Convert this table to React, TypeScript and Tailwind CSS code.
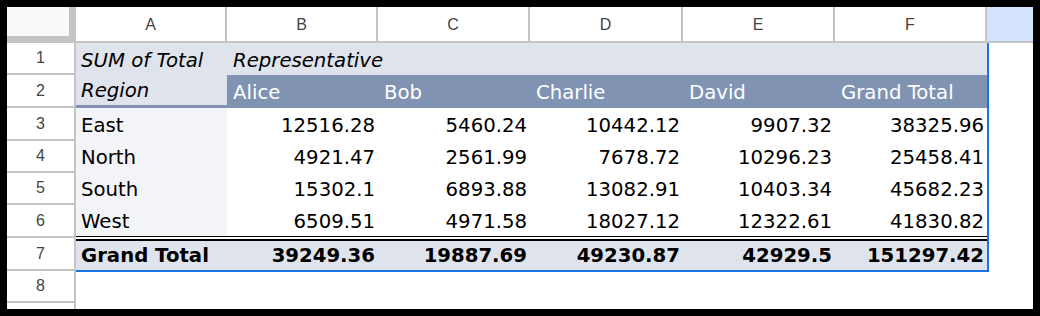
const cols = ["A", "B", "C", "D", "E", "F"];
const colWidths = ["w-[151px]", "w-[151px]", "w-[152px]", "w-[153px]", "w-[152px]", "w-[152px]"];
const rowHeights = ["h-[32px]", "h-[33px]", "h-[33px]", "h-[32px]", "h-[32px]", "h-[33px]", "h-[33px]", "h-[32px]"];

const reps = ["Alice", "Bob", "Charlie", "David", "Grand Total"];

const data = [
  { region: "East", values: ["12516.28", "5460.24", "10442.12", "9907.32", "38325.96"], h: "h-[33px]" },
  { region: "North", values: ["4921.47", "2561.99", "7678.72", "10296.23", "25458.41"], h: "h-[32px]" },
  { region: "South", values: ["15302.1", "6893.88", "13082.91", "10403.34", "45682.23"], h: "h-[32px]" },
  { region: "West", values: ["6509.51", "4971.58", "18027.12", "12322.61", "41830.82"], h: "h-[31px]" },
];

const totals = ["39249.36", "19887.69", "49230.87", "42929.5", "151297.42"];

const App = () => {
  return (
    <div className="w-[1040px] h-[316px] bg-black p-[7px] overflow-hidden">
      <div className="w-full h-full bg-white flex flex-col overflow-hidden font-['DejaVu_Sans',sans-serif] text-[19.7px] text-black">
        {/* Column headers */}
        <div className="flex h-[36px] shrink-0 border-b-2 border-[#c4c4c4] font-['Liberation_Sans',Arial,sans-serif] text-[16px] text-[#444]">
          <div className="w-[69px] h-[34px] bg-[#c4c4c4] shrink-0">
            <div className="w-[62px] h-[29px] bg-[#f8f9fa]" />
          </div>
          {cols.map((c, i) => (
            <div
              key={c}
              className={`${colWidths[i]} shrink-0 flex items-center justify-center pt-[2px] border-r-2 border-[#c4c4c4]`}
            >
              {c}
            </div>
          ))}
          <div className="flex-1 bg-[#d3e3fd]" />
        </div>

        <div className="flex flex-1 min-h-0">
          {/* Row headers */}
          <div className="w-[69px] shrink-0 flex flex-col border-r-2 border-[#c4c4c4] font-['Liberation_Sans',Arial,sans-serif] text-[16px] text-[#444]">
            {rowHeights.map((h, i) => (
              <div
                key={i}
                className={`${h} shrink-0 flex items-center justify-center border-b-2 border-[#c4c4c4]`}
              >
                {i + 1}
              </div>
            ))}
            <div className="flex-1" />
          </div>

          {/* Pivot table */}
          <div className="flex flex-col self-start border-r-2 border-[#1a73e8]">
            {/* Row 1 */}
            <div className="flex h-[32px] bg-[#dfe3ec] italic">
              <div className="w-[151px] flex items-center pt-[4px] px-[5px]">SUM of Total</div>
              <div className="flex-1 flex items-center pt-[4px] px-[6px]">Representative</div>
            </div>

            {/* Row 2 */}
            <div className="flex h-[33px]">
              <div className="w-[151px] flex items-center pt-[2px] px-[5px] bg-[#dfe3ec] italic border-b-[3px] border-[#8093b3]">
                Region
              </div>
              {reps.map((r, i) => (
                <div
                  key={r}
                  className={`${colWidths[i + 1]} flex items-center pt-[2px] px-[6px] bg-[#8093b3] text-white`}
                >
                  {r}
                </div>
              ))}
            </div>

            {/* Data rows */}
            {data.map((row) => (
              <div key={row.region} className={`flex ${row.h}`}>
                <div className="w-[151px] flex items-center pt-[2px] px-[5px] bg-[#f3f4f7]">{row.region}</div>
                {row.values.map((v, i) => (
                  <div
                    key={i}
                    className={`${colWidths[i + 1]} flex items-center justify-end pt-[2px] pl-[5px] pr-[3px]`}
                  >
                    {v}
                  </div>
                ))}
              </div>
            ))}

            {/* Double line */}
            <div className="h-[5px] border-t border-b-2 border-black bg-white" />

            {/* Grand total */}
            <div className="flex h-[31px] bg-[#dfe3ec] font-bold border-b-2 border-[#1a73e8]">
              <div className="w-[151px] flex items-center pt-[1px] px-[5px]">Grand Total</div>
              {totals.map((v, i) => (
                <div
                  key={i}
                  className={`${colWidths[i + 1]} flex items-center justify-end pt-[1px] pl-[5px] pr-[3px]`}
                >
                  {v}
                </div>
              ))}
            </div>
          </div>
          <div className="flex-1" />
        </div>
      </div>
    </div>
  );
};

export default App;
